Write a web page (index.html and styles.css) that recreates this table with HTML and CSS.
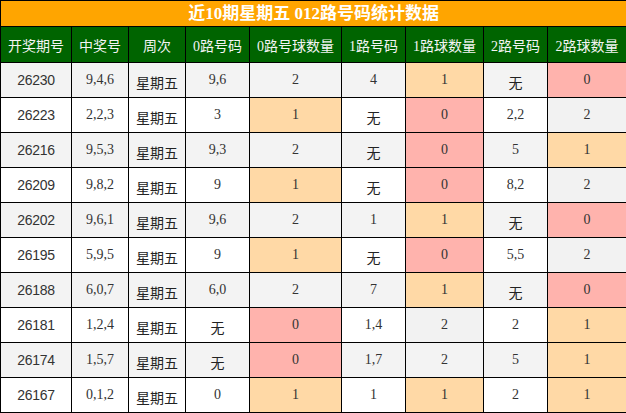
FILE: index.html
```html
<!DOCTYPE html>
<html>
<head>
<meta charset="utf-8">
<link rel="stylesheet" href="styles.css">
</head>
<body>
<table class="stats">
  <colgroup>
    <col class="c1"><col class="c2"><col class="c3"><col class="c4"><col class="c5"><col class="c6"><col class="c7"><col class="c8"><col class="c9">
  </colgroup>
  <thead>
    <tr class="title-row"><th colspan="9">近10期星期五 012路号码统计数据</th></tr>
    <tr class="head-row">
      <th>开奖期号</th><th>中奖号</th><th>周次</th><th>0路号码</th><th>0路号球数量</th><th>1路号码</th><th>1路球数量</th><th>2路号码</th><th>2路球数量</th>
    </tr>
  </thead>
  <tbody>
    <tr class="odd"><td class="issue">26230</td><td>9,4,6</td><td class="cjk">星期五</td><td>9,6</td><td>2</td><td>4</td><td class="peach">1</td><td class="cjk">无</td><td class="pink">0</td></tr>
    <tr><td class="issue">26223</td><td>2,2,3</td><td class="cjk">星期五</td><td>3</td><td class="peach">1</td><td class="cjk">无</td><td class="pink">0</td><td>2,2</td><td class="grey">2</td></tr>
    <tr class="odd"><td class="issue">26216</td><td>9,5,3</td><td class="cjk">星期五</td><td>9,3</td><td>2</td><td class="cjk">无</td><td class="pink">0</td><td>5</td><td class="peach">1</td></tr>
    <tr><td class="issue">26209</td><td>9,8,2</td><td class="cjk">星期五</td><td>9</td><td class="peach">1</td><td class="cjk">无</td><td class="pink">0</td><td>8,2</td><td class="grey">2</td></tr>
    <tr class="odd"><td class="issue">26202</td><td>9,6,1</td><td class="cjk">星期五</td><td>9,6</td><td>2</td><td>1</td><td class="peach">1</td><td class="cjk">无</td><td class="pink">0</td></tr>
    <tr><td class="issue">26195</td><td>5,9,5</td><td class="cjk">星期五</td><td>9</td><td class="peach">1</td><td class="cjk">无</td><td class="pink">0</td><td>5,5</td><td class="grey">2</td></tr>
    <tr class="odd"><td class="issue">26188</td><td>6,0,7</td><td class="cjk">星期五</td><td>6,0</td><td>2</td><td>7</td><td class="peach">1</td><td class="cjk">无</td><td class="pink">0</td></tr>
    <tr><td class="issue">26181</td><td>1,2,4</td><td class="cjk">星期五</td><td class="cjk">无</td><td class="pink">0</td><td>1,4</td><td class="grey">2</td><td>2</td><td class="peach">1</td></tr>
    <tr class="odd"><td class="issue">26174</td><td>1,5,7</td><td class="cjk">星期五</td><td class="cjk">无</td><td class="pink">0</td><td>1,7</td><td>2</td><td>5</td><td class="peach">1</td></tr>
    <tr><td class="issue">26167</td><td>0,1,2</td><td class="cjk">星期五</td><td>0</td><td class="peach">1</td><td>1</td><td class="peach">1</td><td>2</td><td class="peach">1</td></tr>
  </tbody>
</table>
</body>
</html>
```
FILE: styles.css
```css
html, body {
  margin: 0;
  padding: 0;
  background: #ffffff;
}
.stats {
  border-collapse: collapse;
  width: 626px;
  table-layout: fixed;
  font-family: "Liberation Serif", "Noto Sans CJK SC", serif;
  font-size: 14px;
  color: #333333;
}
.c1 { width: 71px; }
.c2 { width: 57px; }
.c3 { width: 57px; }
.c4 { width: 64px; }
.c5 { width: 92px; }
.c6 { width: 64px; }
.c7 { width: 78px; }
.c8 { width: 64px; }
.c9 { width: 79px; }
.stats th, .stats td {
  border: 1px solid #000000;
  text-align: center;
  padding: 0;
}
.title-row th {
  background: #ffa500;
  color: #ffffff;
  font-weight: bold;
  font-size: 17px;
  height: 25px;
  line-height: 24px;
  font-family: "Liberation Serif", "Noto Sans CJK SC", serif;
}
.head-row th {
  background: #006400;
  color: #f4f4f4;
  font-weight: normal;
  height: 35px;
  font-size: 14px;
  font-family: "Liberation Serif", "Noto Sans CJK SC", sans-serif;
}
.stats td {
  height: 34px;
  line-height: 18px;
  background: #ffffff;
}
.stats tr.odd td {
  background: #f3f3f3;
}
.stats td.issue {
  font-family: "Liberation Sans", "Noto Sans CJK SC", sans-serif;
  font-size: 14px;
  letter-spacing: -0.3px;
}
.stats td.cjk {
  font-family: "Noto Sans CJK SC", sans-serif;
  padding-top: 4px;
  height: 30px;
  color: #222222;
}
.stats td.grey, .stats tr.odd td.grey {
  background: #f2f2f2;
}
.stats td.peach, .stats tr.odd td.peach {
  background: #ffd9a6;
}
.stats td.pink, .stats tr.odd td.pink {
  background: #ffb3ad;
}
```
